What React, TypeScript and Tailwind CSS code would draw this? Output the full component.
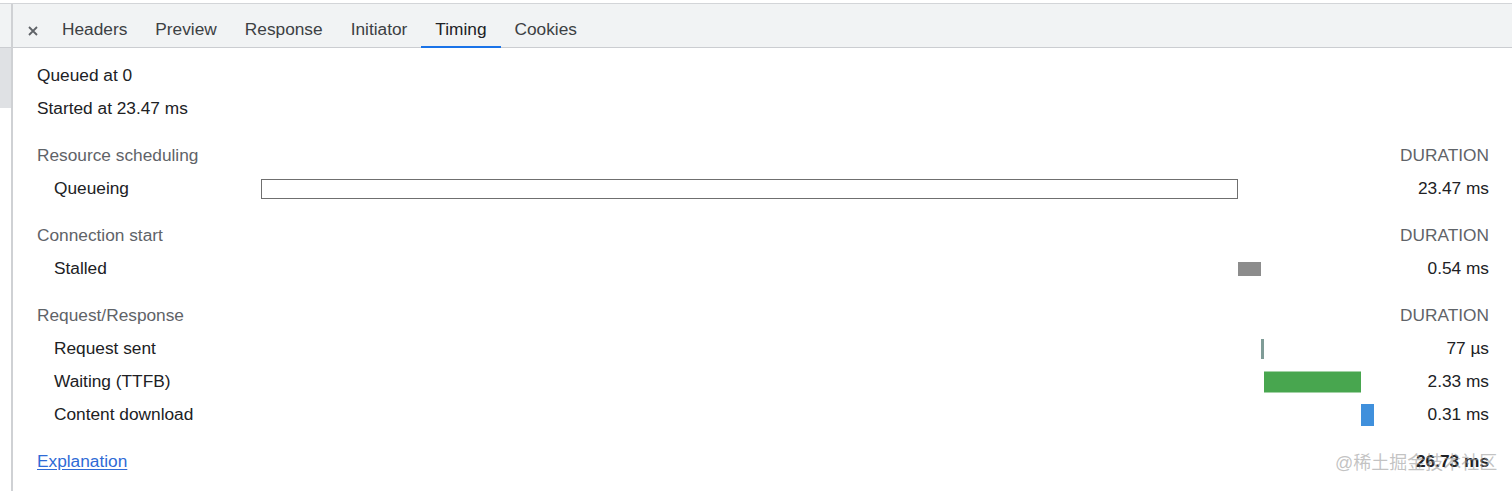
import React from "react";

type Row = { label: string; start: number; dur: number; kind: string; time: string };
type Section = { title: string; rows: Row[] };

const TOTAL = 26.727;

const sections: Section[] = [
  {
    title: "Resource scheduling",
    rows: [{ label: "Queueing", start: 0, dur: 23.47, kind: "queue", time: "23.47 ms" }],
  },
  {
    title: "Connection start",
    rows: [{ label: "Stalled", start: 23.47, dur: 0.54, kind: "stalled", time: "0.54 ms" }],
  },
  {
    title: "Request/Response",
    rows: [
      { label: "Request sent", start: 24.01, dur: 0.077, kind: "sent", time: "77 µs" },
      { label: "Waiting (TTFB)", start: 24.087, dur: 2.33, kind: "waiting", time: "2.33 ms" },
      { label: "Content download", start: 26.417, dur: 0.31, kind: "download", time: "0.31 ms" },
    ],
  },
];

const barClass: Record<string, string> = {
  queue: "h-[20px] border border-[#6f6f6f] bg-white",
  stalled: "h-[14px] bg-[#8c8c8c]",
  sent: "h-[20px] bg-[#7f9c97]",
  waiting: "h-[21px] bg-[#48a64f]",
  download: "h-[22px] bg-[#4090dc]",
};

const tabs = ["Headers", "Preview", "Response", "Initiator", "Timing", "Cookies"];

function TimingBar({ row }: { row: Row }) {
  const left = (row.start / TOTAL) * 100;
  const width = Math.max((row.dur / TOTAL) * 100, 0.2);
  return (
    <div className="relative h-full">
      <div
        className={`absolute top-1/2 -translate-y-1/2 ${barClass[row.kind]}`}
        style={{ left: `${left}%`, width: `${width}%` }}
      />
    </div>
  );
}

export default function App() {
  return (
    <div className="relative w-[1512px] h-[491px] overflow-hidden bg-white pt-[3px] font-['Liberation_Sans',Arial,sans-serif] text-[17.3px] text-[#202124]">
      <div className="flex h-full border-t border-[#d3d5d8]">
        {/* left strip of the request list */}
        <div className="w-[13px] shrink-0 flex flex-col border-r-2 border-[#cfd1d4]">
          <div className="h-[44px] bg-[#f1f3f4] border-b border-[#cbcdd1]" />
          <div className="h-[60px] bg-[#dfe1e4]" />
        </div>

        <div className="flex-1 flex flex-col">
          {/* Tabs */}
          <div className="h-[44px] flex items-stretch bg-[#f1f3f4] border-b border-[#cbcdd1] pl-[7px]">
            <div className="w-[26px] flex items-center justify-center pt-[10px]">
              <svg viewBox="0 0 10 10" className="w-[10px] h-[10px]" stroke="#5f6368" strokeWidth="1.8">
                <path d="M1 1l8 8M9 1L1 9" />
              </svg>
            </div>
            <div className="flex items-stretch ml-[2px]">
              {tabs.map((t) => (
                <div
                  key={t}
                  className={`flex items-center px-[14px] pt-[10px] border-b-2 -mb-px ${
                    t === "Timing" ? "border-[#1a73e8] text-[#202124]" : "border-transparent text-[#3c4043]"
                  }`}
                >
                  {t}
                </div>
              ))}
            </div>
          </div>

          {/* Timing content */}
          <div className="pl-[24px] pr-[23px] pt-[12px]">
            <div className="h-[32px] flex items-center">Queued at 0</div>
            <div className="h-[33px] flex items-center">Started at 23.47 ms</div>

            {sections.map((s) => (
              <div key={s.title} className="mt-[14px]">
                <div className="h-[33px] flex items-center justify-between text-[#5f6368]">
                  <span>{s.title}</span>
                  <span>DURATION</span>
                </div>
                {s.rows.map((r) => (
                  <div key={r.label} className="h-[33px] grid grid-cols-[224px_1fr_115px] items-stretch">
                    <div className="flex items-center pl-[17px]">{r.label}</div>
                    <TimingBar row={r} />
                    <div className="flex items-center justify-end">{r.time}</div>
                  </div>
                ))}
              </div>
            ))}

            <div className="mt-[14px] h-[33px] flex items-center justify-between">
              <a href="#" className="text-[#2f6bd6] underline underline-offset-2">
                Explanation
              </a>
              <span className="font-bold">26.73 ms</span>
            </div>
          </div>
        </div>
      </div>

      {/* watermark */}
      <div className="absolute left-[1335px] top-[450px] text-[18px] text-[#9a9a9a]/60 font-['Liberation_Sans','Noto_Sans_CJK_SC',sans-serif] whitespace-nowrap">
        @稀土掘金技术社区
      </div>
    </div>
  );
}
